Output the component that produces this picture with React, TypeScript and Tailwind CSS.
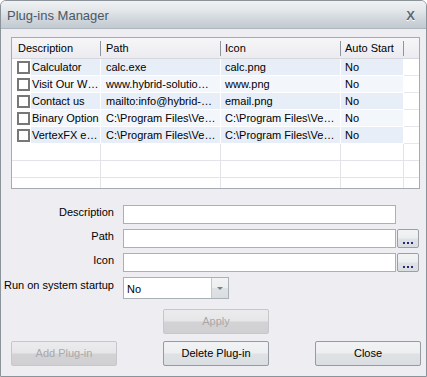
import React from "react";

const rows: string[][] = [
  ["Calculator", "calc.exe", "calc.png", "No"],
  ["Visit Our W…", "www.hybrid-solutio…", "www.png", "No"],
  ["Contact us", "mailto:info@hybrid-…", "email.png", "No"],
  ["Binary Option", "C:\\Program Files\\Ve…", "C:\\Program Files\\Ve…", "No"],
  ["VertexFX e…", "C:\\Program Files\\Ve…", "C:\\Program Files\\Ve…", "No"],
];

function HeaderCell({ w, pl, label, sep = true }: { w: string; pl: string; label: string; sep?: boolean }) {
  return (
    <div className={`${w} h-full flex items-center justify-between shrink-0`}>
      <span className={`${pl} whitespace-nowrap`}>{label}</span>
      {sep ? <div className="w-px h-[15px] bg-[#8f959c]" /> : null}
    </div>
  );
}

function Btn({ children, disabled = false }: { children: React.ReactNode; disabled?: boolean }) {
  return (
    <div
      className={
        disabled
          ? "w-[106px] h-[25px] shrink-0 flex items-center justify-center rounded-[2px] border border-[#c5c7ca] text-[#a9a9a9] bg-[linear-gradient(to_bottom,#ececee_0%,#e6e6e8_48%,#d3d3d5_52%,#d0d0d2_100%)]"
          : "w-[106px] h-[25px] shrink-0 flex items-center justify-center rounded-[2px] border border-[#959ba2] text-black bg-[linear-gradient(to_bottom,#f2f3f5_0%,#eceef0_48%,#dfe2e5_52%,#dadee2_100%)]"
      }
    >
      {children}
    </div>
  );
}

function Dots() {
  return (
    <div className="w-[22px] h-[19px] shrink-0 rounded-[2px] border border-[#9aa0a6] bg-[linear-gradient(to_bottom,#f2f3f5_0%,#eceef0_48%,#dfe2e5_52%,#dadee2_100%)] flex items-end justify-center pb-[3px]">
      <div className="flex gap-[2px]">
        <div className="w-[2px] h-[2px] bg-[#27277a]" />
        <div className="w-[2px] h-[2px] bg-[#27277a]" />
        <div className="w-[2px] h-[2px] bg-[#27277a]" />
      </div>
    </div>
  );
}

export default function App() {
  const empty = 3;
  return (
    <div className="w-[427px] h-[377px] flex flex-col border border-[#8a929a] rounded-t-[6px] overflow-hidden bg-[#eeedf2] font-['Liberation_Sans',Arial,sans-serif] text-[11px] leading-[13px] text-black">
      {/* Title bar */}
      <div className="h-[28px] shrink-0 flex items-center justify-between pl-[6px] pr-[11px] border-b border-[#aeb6be] bg-[linear-gradient(to_bottom,#f0f2f4_0%,#e3e7ea_35%,#cfd5db_70%,#c2c9d0_100%)]">
        <span className="text-[13px] leading-[16px] text-[#4b5866] mt-[2px]">Plug-ins Manager</span>
        <span className="text-[13px] leading-[16px] font-bold text-[#5c6876] [text-shadow:0_1px_0_#ffffff] mt-[2px]">X</span>
      </div>

      {/* Body */}
      <div className="flex-1 flex flex-col pt-[8px] pl-[10px] pr-[6px]">
        {/* List */}
        <div className="h-[152px] shrink-0 border border-[#a6abb1] bg-white overflow-hidden flex flex-col">
          <div className="h-[21px] shrink-0 flex items-center border-b border-[#d6d8dd] bg-[linear-gradient(to_bottom,#f6f6f8_0%,#ececf0_100%)]">
            <HeaderCell w="w-[89px]" pl="pl-[6px]" label="Description" />
            <HeaderCell w="w-[120px]" pl="pl-[5px]" label="Path" />
            <HeaderCell w="w-[120px]" pl="pl-[4px]" label="Icon" />
            <HeaderCell w="w-[63px]" pl="pl-[4px]" label="Auto Start" />
            <div className="flex-1" />
          </div>
          {rows.map((r, i) => {
            const bg = i % 2 === 0 ? "bg-[#e7eef8]" : "bg-[#f3f7fc]";
            return (
              <div key={i} className="h-[17px] shrink-0 flex">
                <div className="w-[89px] shrink-0 flex border-r border-b border-white">
                  <div className="w-[19px] shrink-0 bg-white flex items-center pl-[5px]">
                    <div className="w-[13px] h-[13px] border-2 border-[#777777] bg-white" />
                  </div>
                  <div className={`flex-1 ${bg} flex items-center pl-[1px] whitespace-nowrap overflow-hidden`}>{r[0]}</div>
                </div>
                <div className={`w-[120px] shrink-0 ${bg} flex items-center pl-[5px] border-r border-b border-white whitespace-nowrap overflow-hidden`}>{r[1]}</div>
                <div className={`w-[120px] shrink-0 ${bg} flex items-center pl-[4px] border-r border-b border-white whitespace-nowrap overflow-hidden`}>{r[2]}</div>
                <div className={`w-[63px] shrink-0 ${bg} flex items-center pl-[4px] border-r border-b border-white`}>{r[3]}</div>
                <div className="flex-1 border-b border-[#e6e6ec]" />
              </div>
            );
          })}
          {Array.from({ length: empty }).map((_, i) => (
            <div key={"e" + i} className="h-[17px] shrink-0 flex">
              <div className="w-[89px] shrink-0 border-r border-b border-[#e3e3e9]" />
              <div className="w-[120px] shrink-0 border-r border-b border-[#e3e3e9]" />
              <div className="w-[120px] shrink-0 border-r border-b border-[#e3e3e9]" />
              <div className="w-[63px] shrink-0 border-r border-b border-[#e3e3e9]" />
              <div className="flex-1 border-b border-[#e3e3e9]" />
            </div>
          ))}
        </div>

        {/* Form */}
        <div className="mt-[16px] -ml-[5px] flex flex-col gap-[5px]">
          <div className="flex items-start">
            <div className="w-[117px] shrink-0 text-right pr-[9px] pt-[1px] whitespace-nowrap">Description</div>
            <div className="w-[273px] h-[19px] border border-[#a9b0b6] bg-white" />
          </div>
          <div className="flex items-start">
            <div className="w-[117px] shrink-0 text-right pr-[9px] pt-[1px] whitespace-nowrap">Path</div>
            <div className="w-[273px] h-[19px] border border-[#a9b0b6] bg-white" />
            <div className="w-[1px]" />
            <Dots />
          </div>
          <div className="flex items-start">
            <div className="w-[117px] shrink-0 text-right pr-[9px] pt-[1px] whitespace-nowrap">Icon</div>
            <div className="w-[273px] h-[19px] border border-[#a9b0b6] bg-white" />
            <div className="w-[1px]" />
            <Dots />
          </div>
          <div className="flex items-start">
            <div className="w-[117px] shrink-0 flex justify-end pr-[9px] pt-[2px] whitespace-nowrap">
              <span>Run on system startup</span>
            </div>
            <div className="w-[106px] h-[22px] border border-[#a9b0b6] bg-white flex">
              <div className="flex-1 flex items-center pl-[3px] pt-[2px]">No</div>
              <div className="w-[17px] border-l border-[#c3c8cd] bg-[linear-gradient(to_bottom,#f2f3f5_0%,#eceef0_48%,#dfe2e5_52%,#dadee2_100%)] flex items-center justify-center">
                <div className="w-0 h-0 border-l-[3px] border-r-[3px] border-t-[3px] border-l-transparent border-r-transparent border-t-[#7b8086]" />
              </div>
            </div>
          </div>
        </div>

        {/* Buttons */}
        <div className="mt-[10px] ml-[152px]">
          <Btn disabled>Apply</Btn>
        </div>
        <div className="mt-[7px] flex gap-[46px]">
          <Btn disabled>Add Plug-in</Btn>
          <Btn>Delete Plug-in</Btn>
          <Btn>Close</Btn>
        </div>
      </div>
    </div>
  );
}
